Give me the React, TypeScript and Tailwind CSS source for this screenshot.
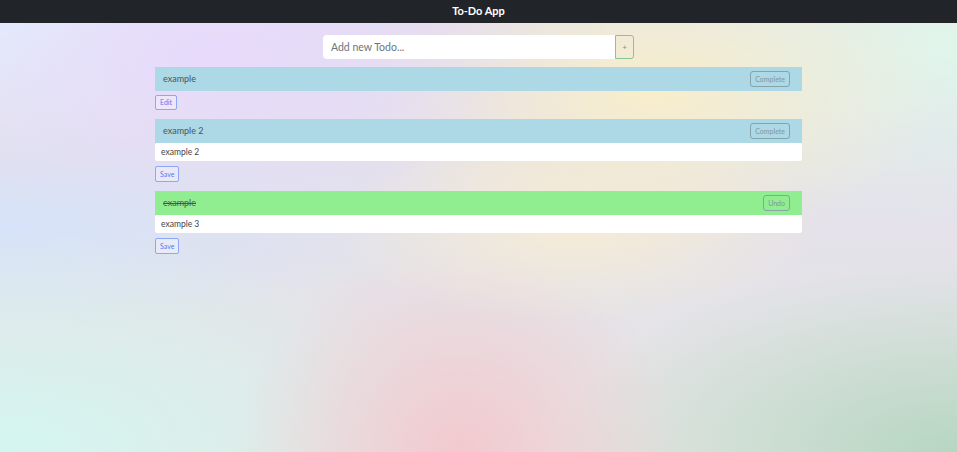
import React from "react";

type Todo = {
  title: string;
  done: boolean;
  editing: boolean;
  draft?: string;
};

const todos: Todo[] = [
  { title: "example", done: false, editing: false },
  { title: "example 2", done: false, editing: true, draft: "example 2" },
  { title: "example", done: true, editing: true, draft: "example 3" },
];

const TodoItem = ({ todo }: { todo: Todo }) => {
  return (
    <div className="mb-[9px]">
      <div
        className={
          "flex h-[24px] items-center justify-between pl-[8px] pr-[12px] text-[9px] text-[#4a5558] " +
          (todo.done ? "bg-[#90ee90]" : "bg-[#add8e6]")
        }
      >
        <span className={todo.done ? "line-through" : ""}>{todo.title}</span>
        <button className="block h-[16px] rounded-[3px] border border-[#85a3aa] px-[4px] text-[7px] leading-none text-[#7f979e]">
          {todo.done ? "Undo" : "Complete"}
        </button>
      </div>
      {todo.editing && (
        <input
          readOnly
          value={todo.draft}
          className="block h-[18px] w-full rounded-[2px] bg-white px-[6px] text-[8.5px] text-[#444] outline-none"
        />
      )}
      <button
        className={
          "block h-[15px] rounded-[2px] border border-[#8ea6f5] bg-white/30 px-[4px] text-[7px] leading-none text-[#5b79f0] " +
          (todo.editing ? "mt-[5px] h-[16px]" : "mt-[4px]")
        }
      >
        {todo.editing ? "Save" : "Edit"}
      </button>
    </div>
  );
};

export default function App() {
  return (
    <div className="min-h-[452px] font-['Lato','Noto_Sans',sans-serif] bg-[radial-gradient(ellipse_at_22%_12%,#e8dafb_0%,transparent_30%),radial-gradient(ellipse_at_68%_20%,#f8eecb_0%,transparent_32%),radial-gradient(ellipse_at_60%_50%,#f5ecd6_0%,transparent_30%),radial-gradient(ellipse_at_48%_100%,#f2c9cf_0%,transparent_32%),radial-gradient(ellipse_at_100%_100%,#b6d6c2_0%,transparent_30%),radial-gradient(ellipse_at_0%_100%,#d3f6f1_0%,transparent_35%),radial-gradient(ellipse_at_0%_50%,#d6e3f9_0%,transparent_32%),radial-gradient(ellipse_at_100%_10%,#e0f6ea_0%,transparent_32%),radial-gradient(ellipse_at_0%_0%,#e1f4fd_0%,transparent_25%),linear-gradient(180deg,#e2ddf0,#e6e6e4)]">
      <header className="flex h-[23px] items-center justify-center bg-[#212529]">
        <h1 className="text-[11px] font-bold text-white">To-Do App</h1>
      </header>

      <main className="mx-auto w-[647px] pt-[12px]">
        <div className="mx-auto mb-[8px] flex h-[24px] w-[311px]">
          <input
            placeholder="Add new Todo..."
            className="h-full flex-1 rounded-l-[4px] bg-white px-[8px] text-[10.5px] text-[#333] placeholder:text-[#6c757d] outline-none"
          />
          <button className="h-full w-[19px] rounded-r-[3px] border border-[#86c597] text-[8px] leading-none text-[#6aa27b]">
            +
          </button>
        </div>

        {todos.map((t, i) => (
          <TodoItem key={i} todo={t} />
        ))}
      </main>
    </div>
  );
}
